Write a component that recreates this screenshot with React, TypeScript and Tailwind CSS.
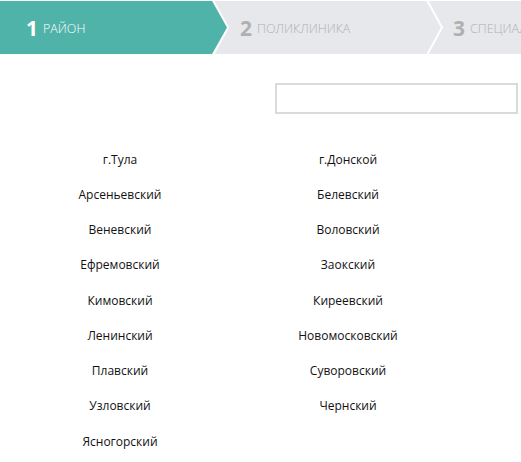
import { useState } from 'react'

const left = ['г.Тула', 'Арсеньевский', 'Веневский', 'Ефремовский', 'Кимовский', 'Ленинский', 'Плавский', 'Узловский', 'Ясногорский']
const right = ['г.Донской', 'Белевский', 'Воловский', 'Заокский', 'Киреевский', 'Новомосковский', 'Суворовский', 'Чернский']

function Chevron({ className }: { className: string }) {
  return (
    <svg className={className} width="20" height="53" viewBox="0 0 20 53">
      <polyline points="1,-1 16,26.5 1,54" fill="none" stroke="#ffffff" strokeWidth="2" />
    </svg>
  )
}

export default function App() {
  const [query, setQuery] = useState('')

  return (
    <div className="min-h-[462px] w-[521px] overflow-hidden bg-white font-['Open_Sans',sans-serif]">
      <header className="relative mt-px flex h-[53px] bg-[#e6e8eb]">
        <div className="z-10 flex w-[228px] shrink-0 items-center bg-[#4fb3a9] pl-[26px] pt-px text-white [clip-path:polygon(0_0,212px_0,227px_50%,212px_100%,0_100%)]">
          <span className="text-[21px] font-bold leading-none">1</span>
          <span className="ml-[5px] mt-[3px] text-[12.5px] font-light leading-none">РАЙОН</span>
        </div>
        <Chevron className="absolute left-[212px] top-0 z-0" />
        <div className="flex w-[200px] shrink-0 items-center pl-[12px] pt-px text-[#aeb1b4]">
          <span className="text-[21px] font-bold leading-none">2</span>
          <span className="ml-[5px] mt-[3px] text-[12.5px] font-light leading-none">ПОЛИКЛИНИКА</span>
        </div>
        <Chevron className="absolute left-[426px] top-0" />
        <div className="flex min-w-0 items-center overflow-hidden whitespace-nowrap pl-[25px] pt-px text-[#aeb1b4]">
          <span className="text-[21px] font-bold leading-none">3</span>
          <span className="ml-[5px] mt-[3px] text-[12.5px] font-light leading-none">СПЕЦИАЛИЗАЦИЯ</span>
        </div>
      </header>

      <div className="mt-[29px] flex justify-start pl-[275px]">
        <input
          value={query}
          onChange={(e) => setQuery(e.target.value)}
          className="h-[31px] w-[243px] border-2 border-[#dadada] bg-white px-2 text-[12px] outline-none"
        />
      </div>

      <div className="mt-[28px] grid grid-cols-[228px_228px] pl-[6px] text-[12px] text-[#111111]">
        <ul className="flex flex-col">
          {left.map((name) => (
            <li key={name} className="flex h-[35.25px] items-center justify-center">
              {name}
            </li>
          ))}
        </ul>
        <ul className="flex flex-col">
          {right.map((name) => (
            <li key={name} className="flex h-[35.25px] items-center justify-center">
              {name}
            </li>
          ))}
        </ul>
      </div>
    </div>
  )
}
